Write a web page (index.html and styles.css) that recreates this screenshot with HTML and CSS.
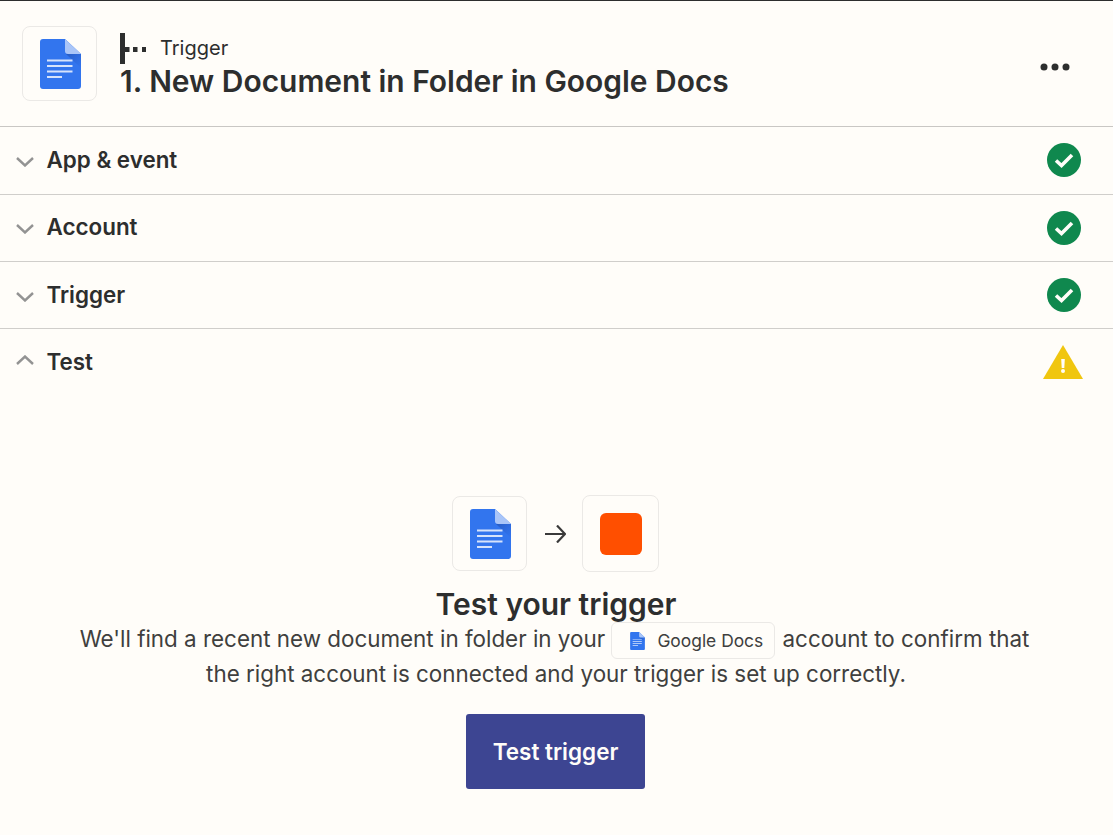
FILE: index.html
```html
<!DOCTYPE html>
<html lang="en">
<head>
<meta charset="utf-8">
<title>Trigger</title>
<link rel="stylesheet" href="styles.css">
</head>
<body>
<svg class="defs" width="0" height="0" aria-hidden="true">
  <defs>
    <linearGradient id="fold" x1="0" y1="0" x2="1" y2="1">
      <stop offset="0" stop-color="#1f4fb0" stop-opacity=".7"/>
      <stop offset="1" stop-color="#2a62d8" stop-opacity=".05"/>
    </linearGradient>
  </defs>
  <symbol id="docs" viewBox="0 0 41 50">
    <path d="M3 0H25L41 15V47a3 3 0 0 1-3 3H3a3 3 0 0 1-3-3V3a3 3 0 0 1 3-3Z" fill="#3275ee"/>
    <path d="M26 15L41 29V15Z" fill="url(#fold)"/>
    <path d="M25 0L41 15H28a3 3 0 0 1-3-3Z" fill="#a9c5f8"/>
    <path d="M7 20.500h25.500v2H7zM7 26h25.500v2H7zM7 31.500h25.500v2H7zM7 37h15v2H7z" fill="#d6e3fb"/>
  </symbol>
  <symbol id="check" viewBox="0 0 34 34">
    <circle cx="17" cy="17" r="17" fill="#0f884e"/>
    <path d="M9 17.500l5.500 5L25 12" fill="none" stroke="#fffdf9" stroke-width="3.600"/>
  </symbol>
  <symbol id="chev" viewBox="0 0 18 10">
    <path d="M1 1l8 7.500L17 1" fill="none" stroke="#939393" stroke-width="2.400"/>
  </symbol>
</svg>
<main class="panel">
  <header class="head">
    <div class="app-box"><svg class="doc-lg"><use href="#docs"/></svg></div>
    <div class="head-text">
      <div class="kind">
        <svg class="kind-icon" viewBox="0 0 26 31"><path d="M0 0h5v31H0zM5 14h4.500v5H5zM13 14h4.500v5H13zM22 14h4v5h-4z" fill="#2d2e2e"/></svg>
        <span>Trigger</span>
      </div>
      <h1 class="title">1. New Document in Folder in Google Docs</h1>
    </div>
    <svg class="more" viewBox="0 0 30 8"><circle cx="4" cy="4" r="3.500"/><circle cx="15" cy="4" r="3.500"/><circle cx="26" cy="4" r="3.500"/></svg>
  </header>
  <section class="row">
    <svg class="chev"><use href="#chev"/></svg><span class="row-name">App &amp; event</span>
    <svg class="status"><use href="#check"/></svg>
  </section>
  <section class="row">
    <svg class="chev"><use href="#chev"/></svg><span class="row-name">Account</span>
    <svg class="status"><use href="#check"/></svg>
  </section>
  <section class="row">
    <svg class="chev"><use href="#chev"/></svg><span class="row-name">Trigger</span>
    <svg class="status"><use href="#check"/></svg>
  </section>
  <section class="row row-open">
    <svg class="chev chev-up"><use href="#chev"/></svg><span class="row-name">Test</span>
    <svg class="warn" viewBox="0 0 40 34"><path d="M20 0L40 34H0Z" fill="#f0c60f"/><path d="M18.200 14h3.600l-.5 9h-2.600zM20 24a2 2 0 1 1 0 4a2 2 0 0 1 0-4Z" fill="#fffdf9"/></svg>
  </section>
  <section class="test">
    <div class="flow">
      <div class="flow-box"><svg class="doc-lg"><use href="#docs"/></svg></div>
      <svg class="arrow" viewBox="0 0 23 18"><path d="M2 9h20M14 .500L22 9l-8 8.500" fill="none" stroke="#3a3a3a" stroke-width="2.200"/></svg>
      <div class="flow-box flow-box-b"><span class="square"></span></div>
    </div>
    <h2 class="test-title">Test your trigger</h2>
    <p class="test-copy">We'll find a recent new document in folder in your <span class="pill"><svg class="doc-sm"><use href="#docs"/></svg>Google Docs</span> account to confirm that<br>the right account is connected and your trigger is set up correctly.</p>
    <button class="cta" type="button">Test trigger</button>
  </section>
</main>
</body>
</html>
```
FILE: styles.css
```css
* { box-sizing: border-box; }
html, body { margin: 0; padding: 0; }
body {
  background: #fffdf9;
  color: #2d2e2e;
  font-family: Inter, "Liberation Sans", sans-serif;
  height: 835px;
  overflow: hidden;
}
.defs { position: absolute; }
.panel { border-top: 1px solid #2d2e2e; }
.head {
  display: flex;
  align-items: center;
  height: 126px;
  padding: 0 43px 0 22px;
  border-bottom: 1px solid #c9c7c4;
}
.app-box {
  width: 75px;
  height: 75px;
  padding-left: 1px;
  border: 1px solid #ebe9e6;
  border-radius: 8px;
  display: flex;
  align-items: center;
  justify-content: center;
  margin-right: 23px;
}
.doc-lg { width: 41px; height: 50px; }
.head-text { flex: 1; margin-top: 4px; }
.kind {
  display: flex;
  align-items: center;
  gap: 14px;
  font-size: 20px;
  height: 31px;
}
.kind-icon { width: 26px; height: 31px; }
.title {
  margin: 0;
  font-size: 29.950px;
  font-weight: 600;
  line-height: 35px;
}
.more { width: 30px; height: 8px; fill: #2d2e2e; margin-top: 6px; }
.row {
  display: flex;
  align-items: center;
  height: 67px;
  padding: 0 30px 1px 16px;
  border-bottom: 1px solid #d0cecb;
}
.row:first-of-type { height: 68px; }
.row:nth-of-type(2) .row-name { margin-bottom: 1px; }
.row:nth-of-type(3) { padding-bottom: 0; }
.row-open { border-bottom: 0; padding-bottom: 2px; }
.chev { width: 18px; height: 10px; margin: 3px 13px 0 0; }
.chev-up { transform: scaleY(-1); margin-top: -3px; }
.row-name {
  flex: 1;
  margin-left: -0.500px;
  font-size: 22.400px;
  line-height: 26px;
  font-weight: 600;
}
.status { width: 34px; height: 34px; margin-right: 2px; }
.warn { width: 40px; height: 34px; }
.test {
  display: flex;
  flex-direction: column;
  align-items: center;
  padding: 99px 1px 0 0;
}
.flow {
  display: flex;
  align-items: center;
  gap: 16px;
  height: 77px;
  padding-right: 1px;
}
.flow-box {
  width: 75px;
  height: 75px;
  padding-left: 1px;
  border: 1px solid #ebe9e6;
  border-radius: 8px;
  display: flex;
  align-items: center;
  justify-content: center;
}
.flow-box-b { width: 77px; height: 77px; padding-left: 0; }
.square {
  width: 42px;
  height: 42px;
  background: #ff4f00;
  border-radius: 6px;
}
.arrow { width: 23px; height: 18px; }
.test-title {
  margin: 14px 0 0;
  font-size: 30px;
  font-weight: 600;
  line-height: 36px;
}
.test-copy {
  margin: -1px 0 0;
  font-size: 22.400px;
  line-height: 35px;
  text-align: center;
  text-indent: -3px;
  color: #403f3e;
}
.pill {
  display: inline-flex;
  align-items: center;
  height: 37px;
  padding: 0 11px 0 18px;
  margin: -4px 1px -4px 0;
  border: 1px solid #ebe9e6;
  border-radius: 6px;
  font-size: 17.400px;
  text-indent: 0;
  vertical-align: middle;
}
.doc-sm { width: 15px; height: 18px; margin-right: 12px; }
.cta {
  margin: 23px 1px 0 0;
  width: 179px;
  height: 75px;
  background: #3d4592;
  color: #fffdf9;
  border: 0;
  border-radius: 3px;
  font: 600 22.500px Inter, "Liberation Sans", sans-serif;
}
```
